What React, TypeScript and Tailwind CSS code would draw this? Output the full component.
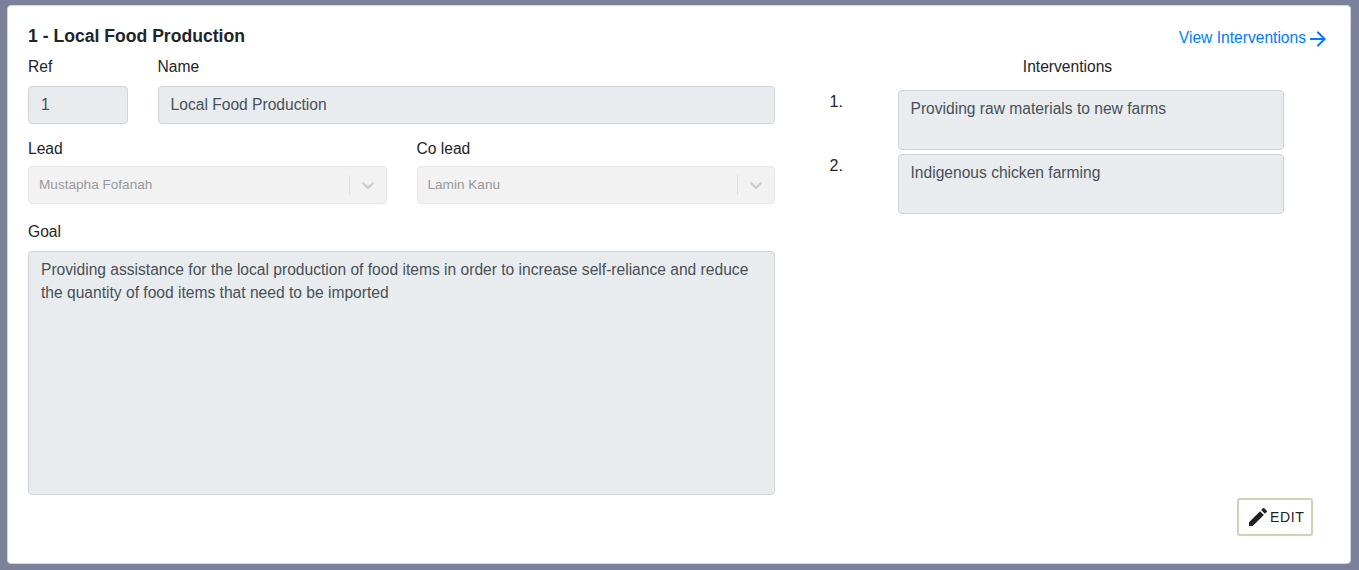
import React from "react";

const field = "rounded-[4px] border border-[#ced4da] bg-[#e8ecef] px-3 text-[#495057]";

function Label({ children }: { children: React.ReactNode }) {
  return <label className="block h-6 pt-px">{children}</label>;
}

function Select({ value }: { value: string }) {
  return (
    <div className="flex h-[38px] rounded-[4px] border border-[#e6e6e6] bg-[#f2f2f2] text-[13.6px]">
      <div className="flex flex-1 items-center pl-[10px] leading-5 text-[#999999]">{value}</div>
      <span className="my-2 w-px bg-[#e0e0e0]" />
      <div className="flex w-9 items-center justify-center text-[#cccccc]">
        <svg width="20" height="20" viewBox="0 0 20 20" fill="currentColor">
          <path d="M4.516 7.548c0.436-0.446 1.043-0.481 1.576 0l3.908 3.747 3.908-3.747c0.533-0.481 1.141-0.446 1.574 0 0.436 0.445 0.408 1.197 0 1.615-0.406 0.418-4.695 4.502-4.695 4.502-0.217 0.223-0.502 0.335-0.787 0.335s-0.57-0.112-0.789-0.335c0 0-4.287-4.084-4.695-4.502s-0.436-1.17 0-1.615z" />
        </svg>
      </div>
    </div>
  );
}

const interventions = ["Providing raw materials to new farms", "Indigenous chicken farming"];

export default function App() {
  return (
    <div className="h-[570px] bg-[#7c819b] pt-[5px] pr-2 pl-[7px] font-['Liberation_Sans',Arial,sans-serif] text-[15.6px] leading-[23.4px] text-[#212529]">
      <div className="flex h-[559px] flex-col rounded-[4px] border border-[#d5d6dc] bg-white px-5">
        <header className="flex h-12 justify-between">
          <h1 className="pt-[18px] text-[17.6px] leading-6 font-bold">1 - Local Food Production</h1>
          <a className="flex pt-5 text-[#007bff]" href="#">
            View Interventions
            <svg className="mt-px" width="24" height="24" viewBox="0 0 24 24" fill="currentColor">
              <path d="m12 4-1.41 1.41L16.17 11H4v2h12.17l-5.58 5.59L12 20l8-8z" />
            </svg>
          </a>
        </header>
        <div className="flex">
          <div className="w-[747px]">
            <div className="flex gap-[29.6px]">
              <div className="w-[100px]">
                <Label>Ref</Label>
                <div className={`mt-2 flex h-[38px] items-center ${field}`}>1</div>
              </div>
              <div className="flex-1">
                <Label>Name</Label>
                <div className={`mt-2 flex h-[38px] items-center ${field}`}>Local Food Production</div>
              </div>
            </div>
            <div className="mt-3 grid grid-cols-2 gap-[30px]">
              <div>
                <Label>Lead</Label>
                <div className="mt-[6px]"><Select value="Mustapha Fofanah" /></div>
              </div>
              <div>
                <Label>Co lead</Label>
                <div className="mt-[6px]"><Select value="Lamin Kanu" /></div>
              </div>
            </div>
            <div className="mt-[15px]">
              <Label>Goal</Label>
              <div className={`mt-2 h-[244px] pt-[6px] ${field}`}>
                Providing assistance for the local production of food items in order to increase self-reliance and reduce the quantity of food items that need to be imported
              </div>
            </div>
          </div>
          <div className="ml-[54.5px] flex-1">
            <div className="ml-[68px] h-6 w-[340px] pt-px text-center">Interventions</div>
            <ol className="mt-3 flex flex-col gap-1">
              {interventions.map((text, i) => (
                <li key={text} className="flex">
                  <span className="w-[68px] text-base leading-6">{i + 1}.</span>
                  <div className={`h-[60px] w-[386px] pt-[6px] ${field}`}>{text}</div>
                </li>
              ))}
            </ol>
          </div>
        </div>
        <div className="mt-[3px] mr-[17px] flex justify-end">
          <button className="flex h-[38px] w-[76px] items-center rounded-[3px] border-2 border-[#c5d8b5] pl-[7px] text-sm tracking-[0.6px] text-[#212121]">
            <svg width="24" height="24" viewBox="0 0 24 24" fill="currentColor">
              <path d="M3 17.25V21h3.75L17.81 9.94l-3.75-3.75L3 17.25zM20.71 7.04c.39-.39.39-1.02 0-1.41l-2.34-2.34c-.39-.39-1.02-.39-1.41 0l-1.83 1.83 3.75 3.75 1.83-1.83z" />
            </svg>
            EDIT
          </button>
        </div>
      </div>
    </div>
  );
}
